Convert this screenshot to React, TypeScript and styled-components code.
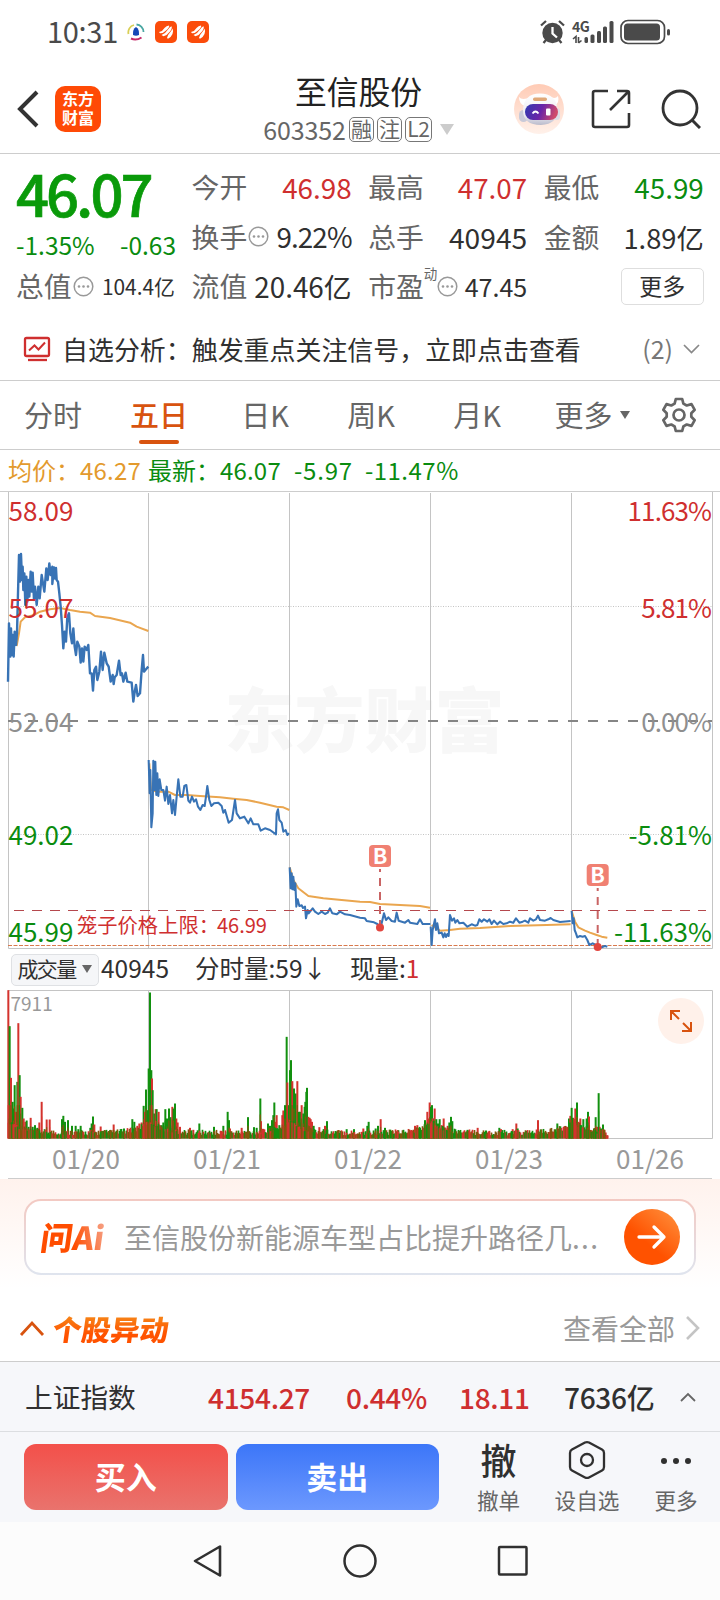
import React from "react";
import styled, { createGlobalStyle } from "styled-components";

const RED = "#cf2f2f";
const GREEN = "#0a8c0f";
const ORANGE = "#d8530f";
const LINE = "#cdcdcd";

const GlobalStyle = createGlobalStyle`
  * { box-sizing: border-box; }
  body {
    margin: 0;
    background: #fff;
    font-family: "Noto Sans CJK SC", "Noto Sans", sans-serif;
    color: #303030;
    line-height: 1;
  }
`;

const Page = styled.div`
  width: 720px;
  height: 1600px;
  display: flex;
  flex-direction: column;
  overflow: hidden;
  background: #fff;
  white-space: nowrap;
`;

const StatusBar = styled.div`
  height: 64px;
  display: flex;
  align-items: center;
  justify-content: space-between;
  padding: 0 50px 0 47px;
`;

const Clock = styled.span`
  font-size: 29px;
  color: #4a4a4a;
  letter-spacing: -0.3px;
  margin-right: 9px;
  padding-bottom: 3px;
`;

const Cluster = styled.div<{ $gap?: number }>`
  display: flex;
  align-items: center;
  gap: ${(p) => p.$gap ?? 0}px;
`;

const Header = styled.header`
  height: 90px;
  border-bottom: 1px solid ${LINE};
  display: grid;
  grid-template-columns: 200px 1fr 200px;
  padding: 0 19px 0 16px;
`;

const HeaderSide = styled.div<{ $end?: boolean }>`
  display: flex;
  align-items: center;
  justify-content: ${(p) => (p.$end ? "flex-end" : "flex-start")};
`;

const AppLogo = styled.div`
  width: 46px;
  height: 46px;
  margin-left: 16px;
  border-radius: 10px;
  background: #ff4a06;
  color: #fff;
  font-size: 16px;
  font-weight: 700;
  line-height: 19px;
  text-align: center;
  padding-top: 3px;
`;

const TitleBlock = styled.div`
  display: flex;
  flex-direction: column;
  align-items: center;
  padding-top: 8px;
`;

const Title = styled.h1`
  margin: 0;
  font-size: 31.8px;
  font-weight: 400;
  line-height: 36px;
  color: #222;
`;

const CodeRow = styled.div`
  display: flex;
  align-items: center;
  height: 26px;
  margin-top: 8px;
  gap: 3px;
  font-size: 25px;
  color: #666;
  letter-spacing: -0.1px;
`;

const Tag = styled.span<{ $w?: number }>`
  width: ${(p) => p.$w ?? 25}px;
  height: 25px;
  border: 1.5px solid #777;
  border-radius: 5px;
  font-size: 21px;
  line-height: 21px;
  display: flex;
  justify-content: center;
  letter-spacing: -0.5px;
`;

const Caret = styled.i<{ $w: number; $h: number; $c: string }>`
  width: 0;
  height: 0;
  border-left: ${(p) => p.$w / 2}px solid transparent;
  border-right: ${(p) => p.$w / 2}px solid transparent;
  border-top: ${(p) => p.$h}px solid ${(p) => p.$c};
`;

const Quote = styled.section`
  height: 158px;
  padding: 9px 16px 0 17px;
  display: grid;
  grid-template-columns: 158px 159px 158px 159px;
  grid-template-rows: repeat(3, 49.5px);
  column-gap: 17.6px;
`;

const PriceBlock = styled.div`
  grid-row: span 2;
  color: ${GREEN};
  margin-left: -1px;
  margin-right: -1px;
`;

const Price = styled.div`
  height: 65px;
  line-height: 58px;
  font-size: 58px;
  font-weight: 500;
  letter-spacing: -3px;
  color: #0a9a0a;
  -webkit-text-stroke: 0.7px #0a9a0a;
`;

const Change = styled.div`
  height: 34px;
  display: flex;
  align-items: center;
  justify-content: space-between;
  font-size: 24.5px;
`;

const Stat = styled.div`
  display: flex;
  align-items: center;
  justify-content: space-between;
`;

const StatLabel = styled.span`
  display: flex;
  align-items: center;
  font-size: 27.8px;
  color: #666;
  gap: 1px;
  margin-left: -1px;
  margin-top: -1px;
`;

const StatValue = styled.span<{ $c?: string; $s?: number; $ls?: number }>`
  font-size: ${(p) => p.$s ?? 27.8}px;
  letter-spacing: ${(p) => p.$ls ?? 0}px;
  color: ${(p) => p.$c ?? "#303030"};
`;

const Dynamic = styled.sup`
  font-size: 13.5px;
  align-self: flex-start;
  line-height: 13px;
  margin: -5px -1px 0 -1px;
  vertical-align: top;
`;

const MoreButton = styled.button`
  width: 83px;
  height: 37px;
  margin-left: auto;
  border: 1.5px solid #dedede;
  border-radius: 5px;
  background: #fff;
  font: inherit;
  font-size: 23px;
  line-height: 30px;
  color: #303030;
  padding: 0 0 4px;
`;

const Analysis = styled.section`
  height: 69px;
  border-bottom: 1px solid ${LINE};
  display: flex;
  align-items: center;
  padding: 5px 20px 0 23px;
  font-size: 25.95px;
`;

const AnalysisText = styled.span`
  margin-left: 11px;
  flex: 1;
`;

const Count = styled.span`
  color: #777;
  font-size: 25px;
  margin-right: 10px;
`;

const Tabs = styled.nav`
  height: 69px;
  border-bottom: 1px solid ${LINE};
  display: grid;
  grid-template-columns: 106px 106px 106px 106px 106px 115px 1fr;
`;

const Tab = styled.div<{ $active?: boolean }>`
  position: relative;
  display: flex;
  align-items: center;
  justify-content: center;
  gap: 7px;
  padding-bottom: 1px;
  font-size: 29px;
  font-weight: ${(p) => (p.$active ? 500 : 400)};
  color: ${(p) => (p.$active ? ORANGE : "#666")};
  &::after {
    content: "";
    display: ${(p) => (p.$active ? "block" : "none")};
    position: absolute;
    bottom: 5px;
    width: 40px;
    height: 4px;
    border-radius: 2px;
    background: ${ORANGE};
  }
`;

const Legend = styled.div`
  height: 42px;
  border-bottom: 1px solid ${LINE};
  display: flex;
  align-items: center;
  padding: 0 0 2px 8px;
  font-size: 24px;
`;

const LegendItem = styled.span<{ $c: string; $ml?: number; $ls?: number }>`
  color: ${(p) => p.$c};
  margin-left: ${(p) => p.$ml ?? 0}px;
  letter-spacing: ${(p) => p.$ls ?? 0}px;
`;

const ChartSvg = styled.svg`
  display: block;
  flex: none;
  overflow: visible;
`;

const VolumeHead = styled.div`
  height: 41px;
  display: flex;
  align-items: center;
  padding-left: 11px;
  font-size: 24.5px;
`;

const Select = styled.div`
  width: 88px;
  height: 32px;
  border: 1.5px solid #dfe1e4;
  border-radius: 5px;
  background: #f5f6f8;
  display: flex;
  align-items: center;
  justify-content: center;
  gap: 7px;
  font-size: 21px;
  letter-spacing: -1.7px;
  margin-right: 2px;
  padding-bottom: 2px;
`;

const VolumeItem = styled.span<{ $ml?: number }>`
  margin-left: ${(p) => p.$ml ?? 0}px;
  padding-bottom: 2px;
  em {
    font-style: normal;
    color: ${RED};
  }
`;

const VolumePanel = styled.div`
  position: relative;
`;

const ExpandButton = styled.button`
  position: absolute;
  right: 16px;
  top: 8px;
  width: 46px;
  height: 46px;
  border: 0;
  padding: 0;
  border-radius: 50%;
  background: #fff1ea;
`;

const Dates = styled.div`
  height: 40px;
  margin: 0 8px;
  border-bottom: 1px solid ${LINE};
  display: grid;
  grid-template-columns: repeat(5, 141px);
  align-items: center;
  padding-bottom: 2px;
  span {
    text-align: center;
    padding-left: 15px;
    font-size: 26px;
    color: #999;
  }
`;

const AskSection = styled.section`
  height: 110px;
  padding: 20px 24px 0;
  background: linear-gradient(#fff2ed, #fff);
`;

const AskBox = styled.div`
  height: 76px;
  border: 2px solid transparent;
  border-radius: 17px;
  background: linear-gradient(#fff, #fff) padding-box,
    linear-gradient(#f3c9c2, #dfe4ee) border-box;
  display: flex;
  align-items: center;
  padding: 0 14px 0 15px;
`;

const AskLogo = styled.span`
  width: 83px;
  font-size: 32px;
  font-weight: 900;
  letter-spacing: 0;
  span {
    display: inline-block;
    transform: skewX(-8deg);
    background: linear-gradient(70deg, #ff4d00 50%, #f5a890);
    background-clip: text;
    -webkit-background-clip: text;
    color: transparent;
    padding-bottom: 3px;
  }
`;

const AskText = styled.span`
  flex: 1;
  font-size: 28px;
  color: #999;
  i {
    font-style: normal;
    letter-spacing: 1.3px;
  }
`;

const AskButton = styled.button`
  width: 56px;
  height: 56px;
  border: 0;
  border-radius: 50%;
  padding: 0;
  background: linear-gradient(40deg, #ff5200 40%, #ff9440);
  display: flex;
  align-items: center;
  justify-content: center;
`;

const MovesRow = styled.section`
  height: 73px;
  border-bottom: 1px solid ${LINE};
  display: flex;
  align-items: center;
  padding: 6px 19px 0 19px;
`;

const MovesTitle = styled.h2`
  margin: 0 0 0 8px;
  flex: 1;
  font-size: 29px;
  font-weight: 900;
  span {
    display: inline-block;
    transform: skewX(-8deg);
    background: linear-gradient(#f58a1a, #ff5200 70%);
    background-clip: text;
    -webkit-background-clip: text;
    color: transparent;
  }
`;

const AllLink = styled.span`
  font-size: 28px;
  color: #999;
  margin-right: 10px;
`;

const IndexRow = styled.section`
  height: 70px;
  background: #f6f7fa;
  border-bottom: 1px solid #dcdee1;
  display: grid;
  grid-template-columns: 208px 138px 113px 105px 116px 1fr;
  align-items: center;
`;

const IndexCell = styled.span<{ $c?: string; $plain?: boolean }>`
  font-size: ${(p) => (p.$plain ? 27.7 : 28)}px;
  font-weight: ${(p) => (p.$plain ? 400 : 500)};
  letter-spacing: ${(p) => (p.$plain ? 0 : -0.3)}px;
  color: ${(p) => p.$c ?? "#303030"};
  padding-left: ${(p) => (p.$plain ? 25 : 0)}px;
`;

const ActionBar = styled.footer`
  height: 90px;
  background: #f6f7fa;
  display: flex;
  padding: 12px 0 0 24px;
`;

const TradeButton = styled.button<{ $sell?: boolean }>`
  width: 203.5px;
  height: 66px;
  flex: none;
  margin-right: 8px;
  border: 0;
  border-radius: 12px;
  background: ${(p) =>
    p.$sell ? "linear-gradient(#3c76f8, #6c98fe)" : "linear-gradient(#f3504a, #e9736d)"};
  color: #fff;
  font: inherit;
  font-size: 31px;
  font-weight: 700;
  padding: 0 0 4px;
`;

const Action = styled.div<{ $w: number; $pl?: number }>`
  width: ${(p) => p.$w}px;
  padding-left: ${(p) => p.$pl ?? 0}px;
  flex: none;
  height: 70px;
  display: flex;
  flex-direction: column;
  align-items: center;
  font-size: 21.6px;
  color: #666;
`;

const ActionIcon = styled.div<{ $lift?: number }>`
  height: 44px;
  margin-top: -6px;
  display: flex;
  flex: none;
  align-items: center;
  justify-content: center;
  font-size: 36px;
  font-weight: 500;
  color: #303030;
  margin-bottom: 7px;
  padding-bottom: ${(p) => p.$lift ?? 0}px;
`;

const SystemNav = styled.div`
  flex: 1;
  background: #fcfcfc;
  display: flex;
  justify-content: center;
  align-items: center;
  gap: 119.5px;
`;

const InfoDots = () => (
  <svg width="21" height="21" viewBox="0 0 21 21">
    <circle cx="10.5" cy="10.5" r="9.3" fill="none" stroke="#999" strokeWidth="1.5" />
    <circle cx="6" cy="10.5" r="1.3" fill="#999" />
    <circle cx="10.5" cy="10.5" r="1.3" fill="#999" />
    <circle cx="15" cy="10.5" r="1.3" fill="#999" />
  </svg>
);

const AppBadge = () => (
  <svg width="22" height="22" viewBox="0 0 22 22">
    <rect width="22" height="22" rx="5" fill="#fb4c0b" />
    <path d="M4 11Q8 10 9.500 7Q11.500 4.500 14 4.500Q15 6 11 9.500Q8 12.500 5 12.300Z" fill="#fff" />
    <path d="M6.500 14Q10.500 12.500 13 8.500Q15 5.500 16.500 5.200Q17.500 7 15 10.500Q12 14.500 8.500 15.200Z" fill="#fff" />
    <path d="M12 17Q12.500 14 15 11.500Q17 9 17.500 7.500Q18.800 10 17.500 13Q16 16.500 13 17.800Z" fill="#fff" />
  </svg>
);

const Chevron = ({ w, h, d, c, s }: { w: number; h: number; d: string; c: string; s: number }) => (
  <svg width={w} height={h} viewBox={`0 0 ${w} ${h}`}>
    <path d={d} fill="none" stroke={c} strokeWidth={s} />
  </svg>
);

const Robot = () => (
  <svg width="50" height="50" viewBox="0 0 50 50">
    <defs>
      <linearGradient id="halo" x1="0" y1="0" x2="0" y2="1">
        <stop offset="0" stopColor="#ffcbb5" />
        <stop offset="1" stopColor="#fff1ea" />
      </linearGradient>
      <linearGradient id="visor" x1="0" y1="0" x2="1" y2=".2">
        <stop offset="0" stopColor="#2f3ab0" />
        <stop offset=".55" stopColor="#6a25a8" />
        <stop offset="1" stopColor="#cf4a6c" />
      </linearGradient>
      <linearGradient id="shell" x1="0" y1="0" x2="0" y2="1">
        <stop offset="0" stopColor="#fff" />
        <stop offset=".7" stopColor="#ecebf2" />
        <stop offset="1" stopColor="#b9bacb" />
      </linearGradient>
    </defs>
    <circle cx="25" cy="25" r="25" fill="url(#halo)" />
    <path d="M5 13 Q5 20 11 22 L17 13 Q8 17 5 13Z M44 12 Q46 19 40 22 L35 12 Q41 16 44 12Z" fill="#fff" />
    <rect x="5" y="26" width="9" height="12" rx="4.500" fill="#c9cad8" />
    <rect x="39" y="24" width="7" height="12" rx="3.500" fill="#dcdce6" />
    <path d="M9 26Q10 9.500 26 9.500Q42 9.500 43.500 25Q44 40 27 41Q9 41 9 26Z" fill="url(#shell)" />
    <rect x="19" y="13.500" width="14" height="3.500" rx="1.700" fill="#e0a878" />
    <rect x="11" y="20" width="33" height="16" rx="8" fill="url(#visor)" />
    <path d="M18.500 29.500q3-4 6 0" fill="none" stroke="#fff" strokeWidth="1.800" />
    <rect x="32" y="24.500" width="4.500" height="7" rx="1" fill="#fff" />
  </svg>
);

type Day = { dx: number; price: string; avg: string };

// Three chart units per pixel.
const DAYS: Day[] = [
  {
    dx: 0,
    price:
      "24,569 27,394 29,470 31,494 33,409 36,489 38,429 41,494 44,419 48,459 51,424 54,304 57,189 60,269 63,186 66,264 68,224 70,294 73,244 76,339 79,254 82,329 85,264 88,314 92,239 95,299 98,242 102,324 105,284 110,339 115,284 119,319 125,249 129,274 133,299 139,229 143,264 148,214 152,249 157,224 157,276 162,226 165,260 168,228 170,264 174,269 178,304 182,344 186,399 190,469 194,419 198,449 202,374 207,364 211,424 216,454 220,409 224,464 228,489 232,449 238,464 242,512 246,469 250,509 254,464 260,474 265,459 270,544 275,544 279,596 283,534 288,524 292,564 298,539 303,479 308,534 313,482 320,514 326,524 332,569 338,549 341,576 344,556 350,549 357,506 362,549 366,544 370,569 377,542 382,569 395,572 400,629 404,600 408,579 413,612 420,604 425,534 429,489 432,539 438,532 445,524",
    avg: "50,462 57,424 62,389 75,376 100,370 120,359 150,352 180,348 210,354 240,359 270,362 285,372 330,378 390,392 410,404 445,417",
  },
  {
    dx: 0,
    price:
      "446,804 449,904 451,834 454,1006 458,964 460,806 464,894 466,809 469,909 472,844 475,912 479,862 484,894 490,894 495,926 500,884 505,936 510,909 516,964 520,924 525,969 530,914 535,862 541,914 548,914 553,882 559,879 565,926 570,932 576,914 582,929 588,922 594,944 601,954 608,939 614,942 618,914 622,882 628,924 634,942 642,934 655,932 665,942 670,962 675,954 686,992 696,984 705,924 710,964 720,979 733,974 745,994 752,979 760,997 775,997 782,1016 795,1009 810,1014 828,1027 830,964 834,952 838,984 845,992 850,1019 857,1014 862,1029 867,1024",
    avg: "448,814 453,894 470,899 505,899 525,909 560,909 600,912 660,916 700,920 740,924 780,932 830,944 850,946 868,954",
  },
  {
    dx: 0,
    price:
      "869,1126 872,1189 875,1144 877,1192 880,1154 883,1194 886,1174 889,1244 893,1222 898,1242 905,1240 909,1248 915,1244 918,1279 923,1254 926,1264 930,1259 938,1249 945,1259 955,1266 965,1259 975,1266 983,1262 990,1249 997,1264 1010,1267 1020,1259 1035,1267 1050,1269 1080,1277 1095,1279 1100,1287 1122,1291 1132,1296 1140,1306 1145,1294 1152,1264 1158,1284 1165,1276 1175,1287 1185,1289 1190,1262 1196,1286 1215,1292 1225,1284 1230,1292 1252,1296 1260,1282 1268,1296 1291,1296",
    avg: "869,1126 880,1164 895,1189 925,1212 970,1219 1080,1229 1110,1230 1140,1236 1215,1240 1260,1242 1290,1247",
  },
  {
    dx: 1080,
    price:
      "212,1304 215,1359 218,1314 225,1282 228,1314 232,1294 237,1324 245,1322 250,1336 254,1324 258,1335 262,1326 266,1332 270,1269 276,1286 282,1279 286,1292 292,1284 298,1294 310,1292 322,1304 335,1297 345,1301 352,1299 358,1282 365,1289 372,1282 382,1289 388,1282 395,1296 402,1286 412,1297 420,1289 430,1296 440,1294 450,1289 460,1292 468,1279 478,1292 488,1289 495,1286 505,1292 510,1279 520,1286 528,1282 534,1271 540,1284 555,1286 565,1282 572,1278 580,1284 600,1290 632,1287",
    avg: "215,1299 225,1306 240,1316 270,1314 300,1310 360,1308 450,1302 560,1299 632,1297",
  },
  {
    dx: 1080,
    price:
      "635,1257 638,1294 641,1279 644,1314 648,1324 652,1336 660,1332 668,1334 675,1332 682,1344 688,1359 698,1354 708,1359 713,1366 725,1366 735,1362 742,1364",
    avg: "635,1257 645,1289 655,1306 675,1316 690,1322 710,1329 725,1334 742,1337",
  },
];

const AXIS: { price: string; pct: string; y: number; c: string; ls: number }[] = [
  { price: "58.09", pct: "11.63%", y: 28.5, c: RED, ls: -0.9 },
  { price: "55.07", pct: "5.81%", y: 125.5, c: RED, ls: -0.9 },
  { price: "52.04", pct: "0.00%", y: 239.5, c: "#8f8f8f", ls: -0.9 },
  { price: "49.02", pct: "-5.81%", y: 352.5, c: GREEN, ls: 0 },
  { price: "45.99", pct: "-11.63%", y: 449.5, c: GREEN, ls: 0 },
];

const DIVIDERS = [148.5, 289.5, 430.5, 571.5];

const Marker = ({ x, top, end }: { x: number; top: number; end: number }) => (
  <g>
    <line x1={x} x2={x} y1={top + 24} y2={end} stroke="#c96464" strokeWidth="2" strokeDasharray="8 6" strokeDashoffset="5" />
    <circle cx={x} cy={end} r="4" fill="#e2453f" />
    <rect x={x - 11} y={top} width="22" height="22" rx="4" fill="#f08072" />
    <text x={x} y={top + 18.5} fontSize="21.500" fontWeight="700" fill="#fff" textAnchor="middle">
      B
    </text>
  </g>
);

const PriceChart = () => (
  <ChartSvg width="720" height="457" viewBox="0 0 720 457">
    <text x="364.500" y="255" fontSize="70" fontWeight="900" fill="#f7f7f7" textAnchor="middle">
      东方财富
    </text>
    <path d="M8.500 0V456.500H712.500V0" fill="none" stroke="#c4c4c4" />
    {DIVIDERS.map((x) => (
      <line key={x} x1={x} x2={x} y1="1" y2="456" stroke="#c4c4c4" />
    ))}
    {[114.5, 342.5].map((y) => (
      <line key={y} x1="8" x2="712" y1={y} y2={y} stroke="#c4c4c4" strokeDasharray="1 1.500" />
    ))}
    <line x1="8" x2="712" y1="453.500" y2="453.500" stroke="#d8794d" strokeDasharray="4 1.500" />
    {DAYS.map((d, i) => (
      <g key={i} transform={`scale(.33333) translate(${d.dx} 0)`} fill="none" strokeLinejoin="round">
        <polyline points={d.avg} stroke="#eaa64f" strokeWidth="6" />
        <polyline points={d.price} stroke="#3873b5" strokeWidth={i === 0 ? 7.2 : 6.2} />
      </g>
    ))}
    <line x1="8" x2="712" y1="229" y2="229" stroke="#858585" strokeWidth="1.800" strokeDasharray="10 10" />
    <line x1="14" x2="706" y1="418.500" y2="418.500" stroke="#b5484d" strokeDasharray="10 8" />
    {AXIS.map((a) => (
      <g key={a.price} fontSize="26" fill={a.c}>
        <text x="8.500" y={a.y}>{a.price}</text>
        <text x={712 + a.ls} y={a.y} textAnchor="end" letterSpacing={a.ls}>{a.pct}</text>
      </g>
    ))}
    <text x="77" y="441" fontSize="20.300" fill={RED}>笼子价格上限：</text>
    <text x="217" y="441" fontSize="20" fill={RED}>46.99</text>
    <Marker x={380} top={353} end={435.5} />
    <Marker x={597.7} top={372} end={455} />
  </ChartSvg>
);

// Volume spikes as x:height pairs with r/g for direction, in chart units.
const SPIKES =
  "25:445r 29:337g 33:182r 38:110g 41:90g 44:160g 48:80r 52:170g 55:346r 59:190g 62:125r 67:92g 71:60r 76:50r 80:54g 86:35g 92:62r 98:35g 105:40g 112:32g 118:48r 125:110r 132:20r 140:57r 149:57r 186:58g 190:68g 195:50g 204:55g 216:38g 227:38g 235:28g 242:38g 271:32g 275:45g 279:66g 283:42r 302:36r 330:25g 341:42r 372:30g 390:28g 397:58g 403:50g 412:38r 418:45r 425:48r 431:98g 435:80r 438:147g 442:85g 446:210g 450:438g 454:205g 456:180r 458:145g 463:75g 467:88r 470:88g 476:80r 480:40r 485:40g 490:48g 496:88g 501:60g 507:90g 512:64g 517:95r 521:90g 525:105g 529:60r 533:48r 540:35r 570:32r 580:26r 598:45g 642:35g 670:38g 683:80g 687:55g 690:30r 725:32r 744:64g 762:34g 770:32g 781:120g 783:52r 804:45g 810:38g 816:55g 820:70g 823:108g 827:50r 830:70r 838:40g 847:70r 850:84r 855:100g 860:305g 862:168r 867:100g 870:205g 873:235g 877:172r 882:150g 887:135g 892:172r 897:80g 900:80g 905:100r 910:75g 914:95g 916:110g 919:140g 921:152g 925:65r 929:62r 932:58r 936:50r 941:38g 958:34r 975:38r 981:52g 1016:25r 1040:28g 1062:28g 1090:30r 1102:38g 1106:50g 1127:30g 1134:38g 1142:58r 1155:32g 1178:22r 1195:25g 1245:38r 1252:40r 1260:32g 1270:30g 1275:55g 1282:80r 1286:60r 1289:108r 1293:95g 1296:100g 1300:60g 1304:90r 1309:58g 1314:45g 1319:58g 1325:40r 1331:60r 1337:30g 1343:38r 1348:48g 1353:65g 1357:52g 1403:25g 1433:32r 1458:24g 1498:32g 1503:28r 1538:28r 1549:45r 1553:30g 1614:55r 1618:20r 1652:27r 1672:45g 1700:35g 1707:60g 1711:68r 1715:92g 1720:62r 1726:90r 1731:108g 1736:50r 1741:60r 1750:58g 1760:60g 1764:80g 1767:66r 1775:25r 1782:30g 1787:64g 1791:35r 1796:136g 1799:35r 1803:30g 1809:42g 1813:25r 1817:18r 1822:10r";

const COLORS: Record<string, string> = { r: "#d4332e", g: "#12900f", m: "#82560e" };

const baseBars = Array.from({ length: 600 }, (_, i) => {
  const noise = Math.abs(Math.sin(i * 12.9898) * 43758.5453) % 1;
  const kind = Math.abs(Math.sin(i * 4.137) * 9573.31) % 1;
  const x = 25 + i * 3;
  const day = ((x - 25) % 423) / 423;
  const edge = Math.exp(-day * 11) * 38 + Math.exp(-(1 - day) * 12) * 34;
  const h = x > 1815 ? 8 : 9 + noise * 17 + edge;
  return { x, h, c: kind < 0.28 ? "r" : kind < 0.62 ? "g" : "m" };
});

const spikeBars = SPIKES.split(" ").map((s) => {
  const [x, rest] = s.split(":");
  return { x: +x, h: parseInt(rest, 10), c: rest.slice(-1) };
});

const VolumeChart = () => (
  <ChartSvg width="720" height="149" viewBox="0 0 720 149">
    <path d="M8.500 149V.5H712.500V148.500H8" fill="none" stroke="#c4c4c4" />
    {DIVIDERS.map((x) => (
      <line key={x} x1={x} x2={x} y1="1" y2="148" stroke="#c4c4c4" />
    ))}
    <g transform="translate(0 148.500) scale(.33333)">
      {spikeBars.map((b, i) => (
        <rect key={i} x={b.x - 3} y={-b.h} width="6" height={b.h} fill={COLORS[b.c]} />
      ))}
      {spikeBars.map((b, i) => (
        <rect key={i} x={b.x - 2} y={-Math.min(b.h * 0.6, 100)} width="3.500" height={Math.min(b.h * 0.6, 100)} fill={COLORS[i % 3 ? "m" : b.c]} />
      ))}
      {baseBars.map((b, i) => (
        <rect key={i} x={b.x - 2} y={-b.h} width="5" height={b.h} fill={COLORS[b.c]} />
      ))}
    </g>
    <text x="10.500" y="20.500" fontSize="19" fill="#999">7911</text>
  </ChartSvg>
);

const GEAR =
  "M14.800 2h6.400l1.200 4.600 3.300 1.900 4.800-1.400 3.200 5.700-3.400 3.500v3.400l3.400 3.500-3.200 5.700-4.800-1.400-3.300 1.900-1.200 4.600h-6.400l-1.200-4.600-3.300-1.900-4.800 1.400-3.200-5.700 3.400-3.500v-3.400L2.300 12.800l3.200-5.700 4.800 1.400 3.300-1.900z";

export default function App() {
  return (
    <Page>
      <GlobalStyle />
      <StatusBar>
        <Cluster $gap={10}>
          <Cluster>
            <Clock>10:31</Clock>
            <svg width="18" height="18" viewBox="0 0 18 18">
              <path d="M1.500 11A7.500 7.500 0 0 1 7 2" fill="none" stroke="#d9cf55" strokeWidth="1.800" />
              <path d="M9.500 1.500A7.500 7.500 0 0 1 16.500 9" fill="none" stroke="#4aa7a2" strokeWidth="1.800" />
              <path d="M4 15.500Q9 18 14.500 14.500" fill="none" stroke="#c52a68" strokeWidth="2" />
              <path d="M9 4Q12.500 6 12 12Q9 13.500 6 12Q5.500 6 9 4Z" fill="#1648b8" />
            </svg>
          </Cluster>
          <Cluster $gap={10}>
            <AppBadge />
            <AppBadge />
          </Cluster>
        </Cluster>
        <svg width="130" height="26" viewBox="0 0 130 26" overflow="visible">
          <g fill="#4a4a4a">
            <circle cx="12.500" cy="14" r="10.200" />
            <path d="M1 6.500 6 2M24 6.500 19 2M6 21l-2.500 3M19 21l2.500 3" stroke="#4a4a4a" strokeWidth="2.300" />
            <path d="M12.500 8v6.500l4.500 4" fill="none" stroke="#fff" strokeWidth="2.300" />
            <text x="32" y="12.500" fontSize="14" fontWeight="700" letterSpacing="-.6">4G</text>
            <path d="M33 20l3-2.500V24M38.500 18v6M38.500 24l3-2.500" fill="none" stroke="#4a4a4a" strokeWidth="1.600" />
            <rect x="44.500" y="18" width="3.500" height="6" rx="1.500" />
            <rect x="50.500" y="15.500" width="4" height="8.500" rx="1.500" />
            <rect x="57" y="12" width="4" height="12" rx="1.500" />
            <rect x="63" y="7.500" width="4" height="16.500" rx="1.500" />
            <rect x="69.500" y="2" width="4" height="22" rx="1.500" />
            <rect x="84" y="4.500" width="36" height="17" rx="3.500" />
            <rect x="127" y="10" width="3" height="6.500" rx="1.500" />
          </g>
          <rect x="81" y="1.500" width="43.500" height="23" rx="7" fill="none" stroke="#4a4a4a" strokeWidth="1.700" />
        </svg>
      </StatusBar>

      <Header>
        <HeaderSide>
          <Chevron w={23} h={38} d="M21 2 4 19 21 36" c="#333" s={4} />
          <AppLogo>东方<br />财富</AppLogo>
        </HeaderSide>
        <TitleBlock>
          <Title>至信股份</Title>
          <CodeRow>
            603352
            <Tag>融</Tag>
            <Tag>注</Tag>
            <Tag $w={27}>L2</Tag>
            <Caret $w={15} $h={11} $c="#ccc" style={{ marginLeft: 5 }} />
          </CodeRow>
        </TitleBlock>
        <HeaderSide $end>
          <Robot />
          <svg width="40" height="40" viewBox="0 0 40 40" style={{ marginLeft: 27 }}>
            <path d="M17 2H4Q2 2 2 4V36Q2 38 4 38H36Q38 38 38 36V24M26 2H36Q38 2 38 4V15M37 3 19 21" fill="none" stroke="#333" strokeWidth="2.600" />
          </svg>
          <svg width="40" height="40" viewBox="0 0 40 40" style={{ marginLeft: 30 }}>
            <circle cx="19" cy="19" r="17" fill="none" stroke="#333" strokeWidth="2.800" />
            <path d="M31 31l8 8" stroke="#333" strokeWidth="3" />
          </svg>
        </HeaderSide>
      </Header>

      <Quote>
        <PriceBlock>
          <Price>46.07</Price>
          <Change>
            <span>-1.35%</span>
            <span>-0.63</span>
          </Change>
        </PriceBlock>
        <Stat><StatLabel>今开</StatLabel><StatValue $c={RED}>46.98</StatValue></Stat>
        <Stat><StatLabel>最高</StatLabel><StatValue $c={RED}>47.07</StatValue></Stat>
        <Stat><StatLabel>最低</StatLabel><StatValue $c={GREEN}>45.99</StatValue></Stat>
        <Stat><StatLabel>换手<InfoDots /></StatLabel><StatValue $ls={-0.9}>9.22%</StatValue></Stat>
        <Stat><StatLabel>总手</StatLabel><StatValue $s={28.2}>40945</StatValue></Stat>
        <Stat><StatLabel>金额</StatLabel><StatValue $s={27.3}>1.89亿</StatValue></Stat>
        <Stat><StatLabel>总值<InfoDots /></StatLabel><StatValue $s={20.9}>104.4亿</StatValue></Stat>
        <Stat><StatLabel>流值</StatLabel><StatValue $s={27.8}>20.46亿</StatValue></Stat>
        <Stat><StatLabel>市盈<Dynamic>动</Dynamic><InfoDots /></StatLabel><StatValue $s={25}>47.45</StatValue></Stat>
        <Stat><MoreButton>更多</MoreButton></Stat>
      </Quote>

      <Analysis>
        <svg width="28" height="26" viewBox="0 0 28 26">
          <rect x="2" y="2" width="24" height="18" rx="1.500" fill="none" stroke={RED} strokeWidth="2.300" />
          <path d="M6 14.500l5.500-5 4 4 6.500-7" fill="none" stroke={RED} strokeWidth="2" />
          <path d="M5 24h19" stroke={RED} strokeWidth="2.300" />
        </svg>
        <AnalysisText>自选分析：触发重点关注信号，立即点击查看</AnalysisText>
        <Count>(2)</Count>
        <Chevron w={17} h={10} d="M1 1 8.500 8.500 16 1" c="#888" s={1.7} />
      </Analysis>

      <Tabs>
        <Tab>分时</Tab>
        <Tab $active>五日</Tab>
        <Tab>日K</Tab>
        <Tab>周K</Tab>
        <Tab>月K</Tab>
        <Tab style={{ paddingLeft: 9 }}>更多<Caret $w={10} $h={8} $c="#666" /></Tab>
        <Tab style={{ paddingRight: 7 }}>
          <svg width="36" height="36" viewBox="0 0 36 36">
            <path d={GEAR} fill="none" stroke="#666" strokeWidth="2.700" strokeLinejoin="round" />
            <circle cx="18" cy="18" r="5.500" fill="none" stroke="#666" strokeWidth="2.700" />
          </svg>
        </Tab>
      </Tabs>

      <Legend>
        <LegendItem $c="#e39a2d">均价：</LegendItem>
        <LegendItem $c="#e39a2d" $ls={0.2}>46.27</LegendItem>
        <LegendItem $c={GREEN} $ml={7}>最新：</LegendItem>
        <LegendItem $c={GREEN} $ls={0.2}>46.07</LegendItem>
        <LegendItem $c={GREEN} $ml={13} $ls={0.8}>-5.97</LegendItem>
        <LegendItem $c={GREEN} $ml={12} $ls={0.5}>-11.47%</LegendItem>
      </Legend>

      <PriceChart />

      <VolumeHead>
        <Select>
          成交量
          <Caret $w={10} $h={8} $c="#666" />
        </Select>
        <VolumeItem>40945</VolumeItem>
        <VolumeItem $ml={26}>分时量:59↓</VolumeItem>
        <VolumeItem $ml={23}>现量:<em>1</em></VolumeItem>
      </VolumeHead>

      <VolumePanel>
        <VolumeChart />
        <ExpandButton>
          <svg width="46" height="46" viewBox="0 0 46 46">
            <path d="M13 22V13H22M13 13l8 8M33 24v9H24M33 33l-8-8" fill="none" stroke={ORANGE} strokeWidth="2" />
          </svg>
        </ExpandButton>
      </VolumePanel>

      <Dates>
        <span>01/20</span>
        <span>01/21</span>
        <span>01/22</span>
        <span>01/23</span>
        <span>01/26</span>
      </Dates>

      <AskSection>
        <AskBox>
          <AskLogo><span>问Ai</span></AskLogo>
          <AskText>至信股份新能源车型占比提升路径几<i>...</i></AskText>
          <AskButton>
            <svg width="30" height="26" viewBox="0 0 30 26">
              <path d="M2 13H27M17 3 27 13 17 23" fill="none" stroke="#fff" strokeWidth="3.300" strokeLinecap="round" strokeLinejoin="round" />
            </svg>
          </AskButton>
        </AskBox>
      </AskSection>

      <MovesRow>
        <Chevron w={26} h={18} d="M2 16 13 4 24 16" c={ORANGE} s={2.8} />
        <MovesTitle><span>个股异动</span></MovesTitle>
        <AllLink>查看全部</AllLink>
        <Chevron w={16} h={26} d="M2 2 13 13 2 24" c="#c4c4c4" s={2.6} />
      </MovesRow>

      <IndexRow>
        <IndexCell $plain>上证指数</IndexCell>
        <IndexCell $c={RED}>4154.27</IndexCell>
        <IndexCell $c={RED}>0.44%</IndexCell>
        <IndexCell $c={RED}>18.11</IndexCell>
        <IndexCell>7636亿</IndexCell>
        <Chevron w={16} h={10} d="M1 9 8 2 15 9" c="#666" s={1.8} />
      </IndexRow>

      <ActionBar>
        <TradeButton>买入</TradeButton>
        <TradeButton $sell>卖出</TradeButton>
        <Action $w={103}>
          <ActionIcon $lift={3}>撤</ActionIcon>
          撤单
        </Action>
        <Action $w={74}>
          <ActionIcon>
            <svg width="38" height="40" viewBox="0 0 38 40">
              <path d="M17 2.600Q19 1.500 21 2.600L34 9.500Q36 10.600 36 13V27Q36 29.400 34 30.500L21 37.400Q19 38.500 17 37.400L4 30.500Q2 29.400 2 27V13Q2 10.600 4 9.500Z" fill="none" stroke="#303030" strokeWidth="2.300" />
              <circle cx="19" cy="20" r="6" fill="none" stroke="#303030" strokeWidth="2.300" />
            </svg>
          </ActionIcon>
          设自选
        </Action>
        <Action $w={96} $pl={8}>
          <ActionIcon>
            <svg width="32" height="8" viewBox="0 0 32 8">
              <circle cx="4" cy="5" r="3" fill="#303030" />
              <circle cx="16" cy="5" r="3" fill="#303030" />
              <circle cx="28" cy="5" r="3" fill="#303030" />
            </svg>
          </ActionIcon>
          更多
        </Action>
      </ActionBar>

      <SystemNav>
        <svg width="32" height="36" viewBox="0 0 32 36">
          <path d="M28 3.500V32.500L3 18Z" fill="none" stroke="#303030" strokeWidth="2.600" strokeLinejoin="round" />
        </svg>
        <svg width="34" height="34" viewBox="0 0 34 34">
          <circle cx="17" cy="17" r="15.500" fill="none" stroke="#303030" strokeWidth="2.500" />
        </svg>
        <svg width="32" height="32" viewBox="0 0 32 32">
          <rect x="2" y="2" width="27.500" height="27.500" rx="1" fill="none" stroke="#303030" strokeWidth="2.500" />
        </svg>
      </SystemNav>
    </Page>
  );
}
